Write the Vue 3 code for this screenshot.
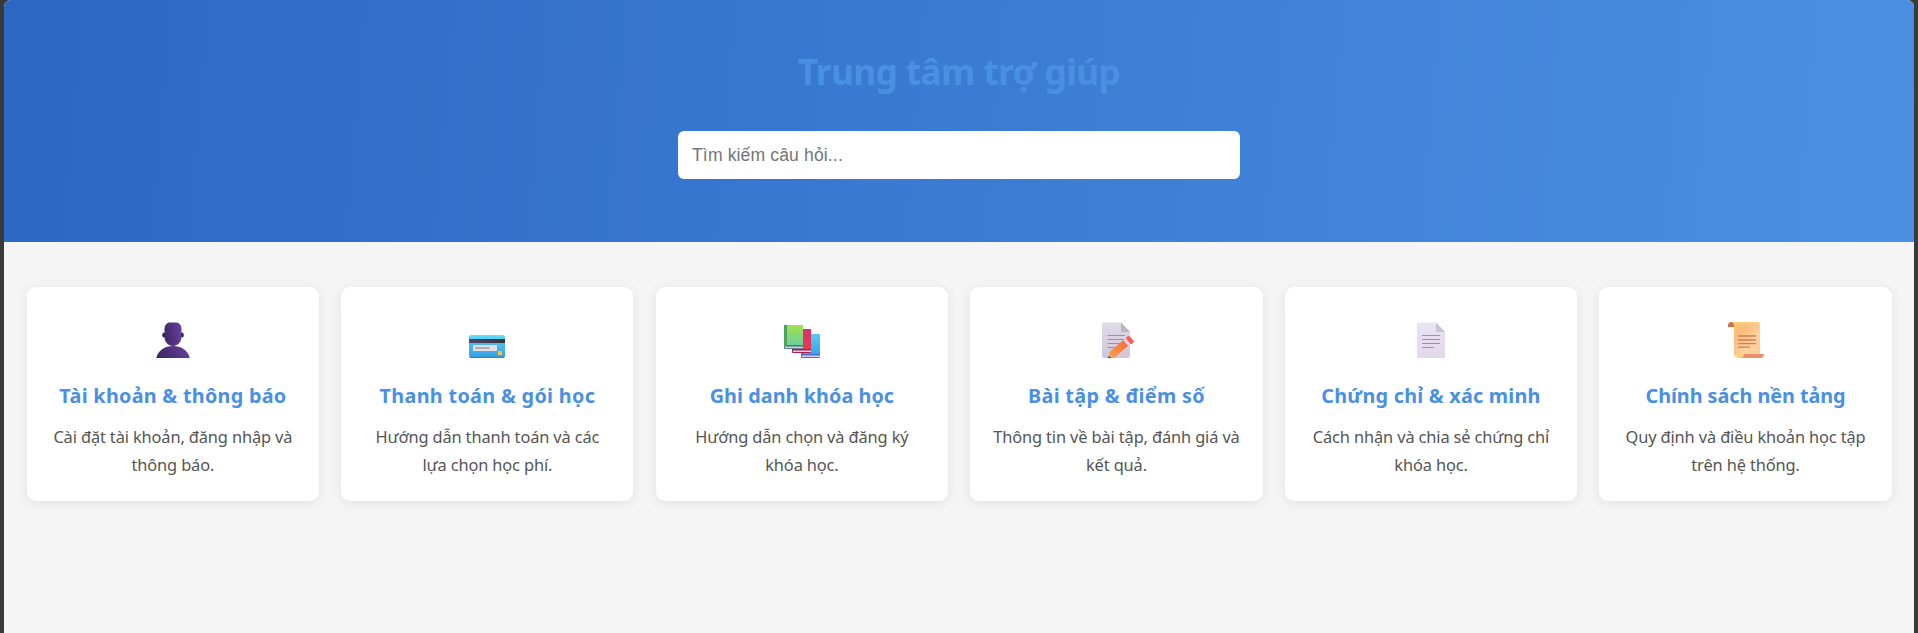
<script setup>
const topics = [
  { icon: 'user', track: 0.28, title: 'Tài khoản & thông báo', text: ['Cài đặt tài khoản, đăng nhập và', 'thông báo.'] },
  { icon: 'card', track: 0.33, title: 'Thanh toán & gói học', text: ['Hướng dẫn thanh toán và các', 'lựa chọn học phí.'] },
  { icon: 'books', track: 0.06, title: 'Ghi danh khóa học', text: ['Hướng dẫn chọn và đăng ký', 'khóa học.'] },
  { icon: 'memo', track: 0.33, title: 'Bài tập & điểm số', text: ['Thông tin về bài tập, đánh giá và', 'kết quả.'] },
  { icon: 'page', track: 0.24, title: 'Chứng chỉ & xác minh', text: ['Cách nhận và chia sẻ chứng chỉ', 'khóa học.'] },
  { icon: 'scroll', track: -0.04, title: 'Chính sách nền tảng', text: ['Quy định và điều khoản học tập', 'trên hệ thống.'] },
]
</script>

<template>
  <div class="page">
    <header class="hero">
      <h1>Trung tâm trợ giúp</h1>
      <input class="search" type="text" placeholder="Tìm kiếm câu hỏi..." />
    </header>
    <main class="grid">
      <article v-for="t in topics" :key="t.icon" class="card">
        <svg v-if="t.icon === 'user'" class="icon" viewBox="0 0 36 36">
          <defs>
            <linearGradient id="gu" x1="0" y1="0.6" x2="1" y2="0.4"><stop offset="0" stop-color="#3f2762" /><stop offset="1" stop-color="#643fa0" /></linearGradient>
          </defs>
          <ellipse cx="8.8" cy="13" rx="1.6" ry="2.5" fill="#35205a" />
          <ellipse cx="27.2" cy="13" rx="1.6" ry="2.5" fill="#35205a" />
          <path d="M1.3 36C3 28.500 9.500 24 18 24s15.200 4.500 16.700 12z" fill="url(#gu)" />
          <path d="M9.500 7C9.500 3 12 .4 15 .4h6c3 0 5.500 2.600 5.500 6.600v8c0 5-4 9-8.500 9s-8.500-4-8.500-9z" fill="url(#gu)" />
        </svg>
        <svg v-else-if="t.icon === 'card'" class="icon" viewBox="0 0 36 36">
          <defs>
            <linearGradient id="gc" x1="0" y1="0" x2="0" y2="1"><stop offset="0" stop-color="#5fe0fa" /><stop offset=".4" stop-color="#4abbef" /><stop offset="1" stop-color="#3a9ee4" /></linearGradient>
            <linearGradient id="gs" x1="0" y1="0" x2="1" y2="0"><stop offset="0" stop-color="#54416f" /><stop offset="1" stop-color="#343438" /></linearGradient>
          </defs>
          <rect x="0" y="13" width="36" height="23" rx="2.5" fill="url(#gc)" />
          <path d="M.7 35.300h34.600" stroke="#2e83bf" stroke-width="1" />
          <rect x="0" y="17" width="36" height="4" fill="url(#gs)" />
          <rect x="4" y="23" width="24" height="6" rx=".6" fill="#e2dfe5" />
          <path d="M6 26h14.500" stroke="#aaa7ad" stroke-width="1.800" />
          <rect x="29" y="29" width="4" height="4" rx=".6" fill="#f6c83c" />
        </svg>
        <svg v-else-if="t.icon === 'books'" class="icon" viewBox="0 0 36 36">
          <defs>
            <linearGradient id="gb1" x1="0" y1="0" x2="0" y2="1"><stop offset="0" stop-color="#a3e04e" /><stop offset="1" stop-color="#6bd09a" /></linearGradient>
            <linearGradient id="gb2" x1="0" y1="0" x2="0" y2="1"><stop offset="0" stop-color="#db2f72" /><stop offset="1" stop-color="#e83a4c" /></linearGradient>
            <linearGradient id="gb3" x1="0" y1="0" x2="0" y2="1"><stop offset="0" stop-color="#52cdf5" /><stop offset="1" stop-color="#38a4ec" /></linearGradient>
          </defs>
          <rect x="17" y="12" width="19" height="24" rx="1" fill="#4371cf" />
          <rect x="19" y="12" width="17" height="20" rx=".8" fill="url(#gb3)" />
          <rect x="18" y="33.500" width="18" height="1.500" fill="#dfc8ef" />
          <rect x="8" y="7" width="19" height="24" rx="1" fill="#a91c56" />
          <rect x="10" y="7" width="17" height="20" rx=".8" fill="url(#gb2)" />
          <rect x="9" y="28.500" width="18" height="1.500" fill="#efc9dd" />
          <rect x="0" y="3" width="19" height="24" rx="1" fill="#4d7983" />
          <rect x="0" y="3" width="3" height="22" rx="1" fill="#4ba35d" />
          <rect x="3" y="3" width="16" height="20" rx=".6" fill="url(#gb1)" />
          <rect x="1" y="24.600" width="18" height="1.500" fill="#d9cde9" />
        </svg>
        <svg v-else-if="t.icon === 'memo'" class="icon" viewBox="0 0 36 36">
          <defs>
            <linearGradient id="gm" x1="0" y1="0" x2="0" y2="1"><stop offset="0" stop-color="#e1dbe8" /><stop offset="1" stop-color="#d0c5dc" /></linearGradient>
            <linearGradient id="gp" x1="0" y1="1" x2="1" y2="0"><stop offset="0" stop-color="#ffa044" /><stop offset="1" stop-color="#f3683f" /></linearGradient>
          </defs>
          <path d="M5.500.6h17.500l9 9.400v24.600a1.400 1.400 0 0 1-1.400 1.400H5.400A1.400 1.400 0 0 1 4 34.600V2A1.400 1.400 0 0 1 5.400.6z" fill="url(#gm)" />
          <path d="M23 .6l9 9.400h-8a1 1 0 0 1-1-1z" fill="#bbb5c0" />
          <path d="M9.500 13.500h17.500M9.500 17.500h17.500M9.500 21.500h14M9.500 25.500h8" stroke="#9b91a6" stroke-width="1.100" />
          <path d="M12 30l-2 6h5.500l2-1z" fill="#dca681" />
          <path d="M10.600 34L10 36h3z" fill="#4d2341" />
          <path d="M12 29.500L25.500 18l5 5.500L17 35.200q-1 .8-2 0l-3-3.700q-.8-1 0-2z" fill="url(#gp)" />
          <path d="M25.200 18.300l2.500-2.200 4.800 5.300-2.500 2.200z" fill="#e4d7ec" />
          <path d="M27.700 16.100l2-1.800q1-.8 2 .2l3.800 4.200q.8 1-.2 1.800l-2.400 2z" fill="#fb5b54" />
        </svg>
        <svg v-else-if="t.icon === 'page'" class="icon" viewBox="0 0 36 36">
          <defs>
            <linearGradient id="gd" x1="0" y1="0" x2="0" y2="1"><stop offset="0" stop-color="#eae3f2" /><stop offset="1" stop-color="#e2d8ec" /></linearGradient>
          </defs>
          <path d="M4.500.6H23l9 9.400v25.500a.5.5 0 0 1-.5.500h-27a.5.5 0 0 1-.5-.5V1.100a.5.5 0 0 1 .5-.5z" fill="url(#gd)" />
          <path d="M23 .6l9 9.400h-8.500a.5.5 0 0 1-.5-.5z" fill="#c8c3cd" />
          <path d="M9.500 13.500h17M9.500 17.500h17M9.500 21.500h17M9.500 25.500h11" stroke="#9a91a6" stroke-width="1.150" stroke-linecap="round" />
        </svg>
        <svg v-else class="icon" viewBox="0 0 36 36">
          <defs>
            <linearGradient id="gr" x1="0" y1="0" x2="1" y2="1"><stop offset="0" stop-color="#ffcb78" /><stop offset=".3" stop-color="#fbba7c" /><stop offset=".65" stop-color="#ffd39d" /><stop offset="1" stop-color="#ffc98e" /></linearGradient>
          </defs>
          <path d="M0 5V3.500A3.500 3.500 0 0 1 3.500 0H8v5z" fill="#cb714a" />
          <path d="M4 0h25a3 3 0 0 1 3 3v31H9a3 3 0 0 1-3-3V4Q6 1 4 0z" fill="url(#gr)" />
          <path d="M4 0h25a3 3 0 0 1 2.900 2.200H6.500Q5.600.6 4 0z" fill="#ffcf78" />
          <path d="M6 31a5 5 0 0 0 4.500 5h5l1-4z" fill="#ffd183" />
          <path d="M17 32h19q0 4-3.500 4H13.500q1.800-.5 2-2.500 0-1.500 1.500-1.500z" fill="#e98f70" />
          <path d="M10.500 14h17M10.500 18h17M10.500 21.700h17M10.500 25.200h11" stroke="#cf7f57" stroke-width="1.300" stroke-linecap="round" />
        </svg>
        <h3 :style="{ letterSpacing: t.track + 'px' }">{{ t.title }}</h3>
        <p><template v-for="(line, i) in t.text" :key="i"><br v-if="i" />{{ line }}</template></p>
      </article>
    </main>
  </div>
</template>

<style>
html,
body {
  background: #3a3a3a;
  overflow: hidden;
}
</style>

<style scoped>
.page {
  box-sizing: border-box;
  height: 633px;
  margin: 0 4px;
  overflow: hidden;
  border-radius: 7px 7px 0 0;
  background: #f5f5f5;
  font-family: "Noto Sans", "Open Sans", sans-serif;
}
.hero {
  box-sizing: border-box;
  height: 242px;
  padding-top: 47px;
  display: flex;
  flex-direction: column;
  align-items: center;
  background: linear-gradient(95deg, #2c67c4, #4a90e2);
}
h1 {
  margin: 0 0 36px;
  font-size: 35.200px;
  line-height: 48px;
  font-weight: 700;
  letter-spacing: -0.55px;
  color: #4a90e2;
  white-space: nowrap;
}
.search {
  box-sizing: border-box;
  width: 562px;
  height: 48px;
  padding: 0 14px;
  border: 0;
  border-radius: 6px;
  outline: none;
  background: #fff;
  font-family: "Liberation Sans", Arial, sans-serif;
  font-size: 17.600px;
  letter-spacing: 0.12px;
}
.search::placeholder {
  color: #757575;
}
.grid {
  display: grid;
  grid-template-columns: repeat(6, 1fr);
  gap: 22.400px;
  padding: 45px 22.400px 0 22.800px;
}
.card {
  box-sizing: border-box;
  height: 214px;
  padding-top: 35px;
  border-radius: 9px;
  background: #fff;
  box-shadow: 0 2px 12px rgba(0, 0, 0, 0.08);
  text-align: center;
}
.icon {
  display: block;
  width: 36px;
  height: 36px;
  margin: 0 auto 23px;
}
h3 {
  margin: 0 0 13px;
  font-size: 19.800px;
  line-height: 29px;
  font-weight: 700;
  color: #4a90e2;
  white-space: nowrap;
}
p {
  margin: 0;
  font-size: 16.400px;
  line-height: 28px;
  letter-spacing: -0.13px;
  color: #555;
  white-space: nowrap;
}
</style>
